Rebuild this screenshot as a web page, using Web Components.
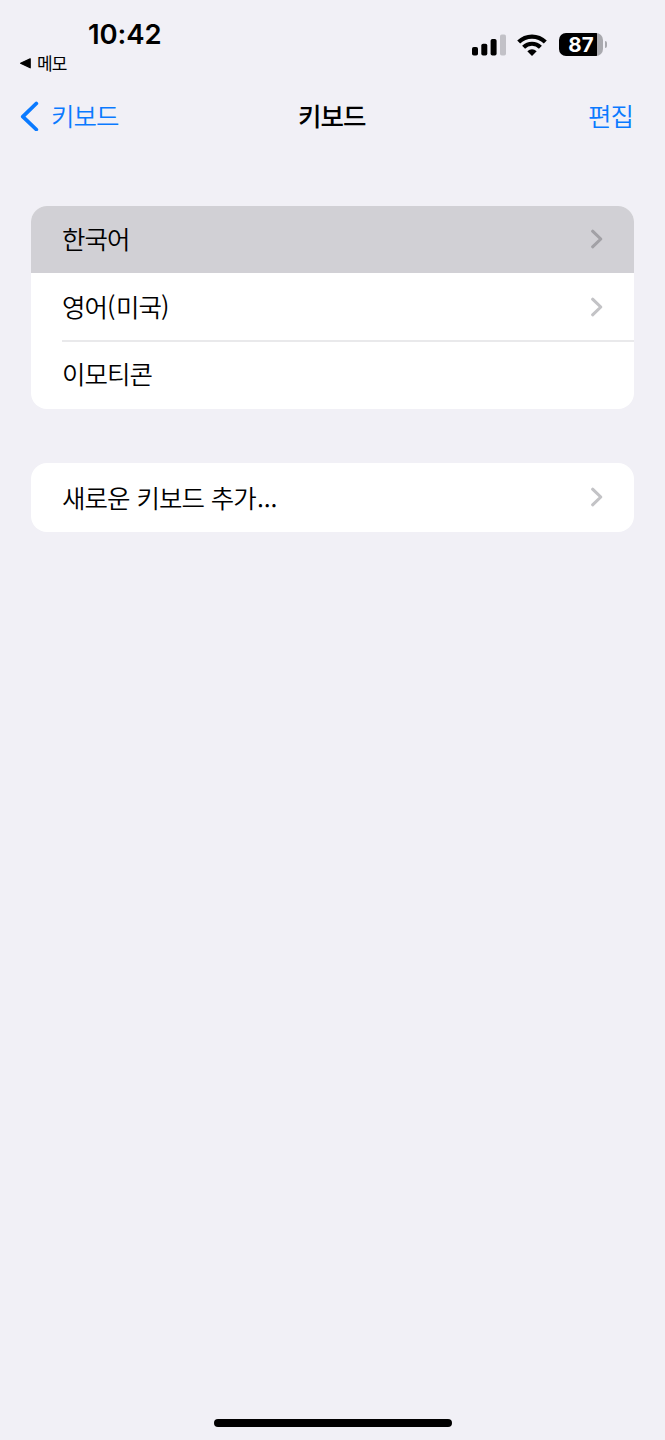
<!DOCTYPE html>
<html lang="ko">
<head>
<meta charset="utf-8">
<meta name="viewport" content="width=device-width, initial-scale=1">
<title>키보드</title>
<style>
    html, body {
        margin: 0;
        height: 100%;
    }

    body {
        --color-tint: #0a7aff;
        --color-label: #000000;
        --color-background: #f1f0f6;
        --color-cell: #ffffff;
        --color-cell-pressed: #d1d0d5;
        --color-separator: #e9e9eb;
        font-family: "Noto Sans CJK KR", sans-serif;
        color: var(--color-label);
        background: var(--color-background);
    }

    /* punctuation is set looser than the Hangul around it */
    .paren {
        letter-spacing: 0.4px;
    }

    .dots {
        letter-spacing: -0.1px;
        margin-left: 1px;
    }
</style>
</head>
<body>
<settings-screen>
    <status-bar slot="status" time="10:42" battery="87">메모</status-bar>
    <nav-bar slot="nav">
        <span slot="back">키보드</span>
        <span slot="title">키보드</span>
        <span slot="action">편집</span>
    </nav-bar>
    <list-group>
        <list-row pressed chevron>한국어</list-row>
        <list-row chevron>영어<span class="paren">(</span>미국<span class="paren">)</span></list-row>
        <list-row separator>이모티콘</list-row>
    </list-group>
    <list-group>
        <list-row chevron tall>새로운 키보드 추가<span class="dots">...</span></list-row>
    </list-group>
</settings-screen>

<script>
(function () {

    class BaseElement extends HTMLElement {
        constructor() {
            super();
            const template = document.createElement('template');
            template.innerHTML = this.constructor.markup;
            this.attachShadow({ mode: 'open' });
            this.shadowRoot.appendChild(template.content.cloneNode(true));
        }
    }

    class SettingsScreen extends BaseElement {
        static markup = `
            <style>
                :host {
                    display: flex;
                    flex-direction: column;
                    height: 100vh;
                    min-height: 700px;
                    box-sizing: border-box;
                    overflow: hidden;
                }

                main {
                    flex: 1;
                    display: flex;
                    flex-direction: column;
                    gap: 54px;
                    padding: 57.5px 31px 0;
                }

                .home {
                    width: 238px;
                    height: 8px;
                    margin: 0 auto 13px;
                    border-radius: 4px;
                    background: #000;
                }
            </style>
            <slot name="status"></slot>
            <slot name="nav"></slot>
            <main><slot></slot></main>
            <div class="home"></div>
        `;
    }

    class StatusBar extends BaseElement {
        static markup = `
            <style>
                :host {
                    display: flex;
                    justify-content: space-between;
                    height: 84px;
                    padding: 0 58px 0 19px;
                    box-sizing: border-box;
                }

                .left {
                    display: flex;
                    flex-direction: column;
                    padding-top: 18px;
                }

                .time {
                    margin-left: 69px;
                    font: 600 27.5px/32px Inter, sans-serif;
                    letter-spacing: -0.1px;
                }

                .return {
                    display: flex;
                    align-items: center;
                    gap: 6px;
                    height: 26px;
                    font-size: 17px;
                    line-height: 26px;
                    letter-spacing: -0.8px;
                }

                .right {
                    display: flex;
                    align-items: center;
                    height: 25px;
                    padding-top: 32px;
                }

                .wifi {
                    margin: 0 12px 0 11px;
                }

                .battery {
                    display: flex;
                    align-items: center;
                    gap: 2px;
                }

                .cell {
                    width: 44px;
                    height: 23px;
                    border-radius: 7px;
                    background: linear-gradient(90deg, #000 38px, #a9a9ae 38px);
                    color: #fff;
                    font: 700 20.5px/24.5px Inter, sans-serif;
                    text-align: center;
                }

                .cap {
                    width: 2px;
                    height: 7px;
                    border-radius: 0 3px 3px 0;
                    background: #a9a9ae;
                }
            </style>
            <div class="left">
                <div class="time"></div>
                <div class="return">
                    <svg width="12" height="12" viewBox="0 0 12 12"><path d="M1.6 6.3 11.2 1.8V10.8Z" stroke="#000" stroke-width="1.2" stroke-linejoin="round"/></svg>
                    <span><slot></slot></span>
                </div>
            </div>
            <div class="right">
                <svg width="34" height="22" viewBox="0 0 34 22">
                    <rect x="0" y="13" width="6" height="8.5" rx="1.8"/>
                    <rect x="9.3" y="9.7" width="6" height="11.8" rx="1.8"/>
                    <rect x="18.6" y="5" width="6" height="16.5" rx="1.8"/>
                    <rect x="28" y="0.5" width="6" height="21" rx="1.8" fill="#c2c1c7"/>
                </svg>
                <svg class="wifi" width="30" height="22" viewBox="0 0 30 22" fill="none" stroke="#000" stroke-width="4.2">
                    <path d="M1.7 8.1A19 19 0 0 1 28.3 8.1"/>
                    <path d="M6.6 13.2A12 12 0 0 1 23.4 13.2"/>
                    <path d="M15 22 10.3 17.3Q15 13.3 19.7 17.3Z" fill="#000" stroke="none"/>
                </svg>
                <div class="battery">
                    <div class="cell"></div>
                    <div class="cap"></div>
                </div>
            </div>
        `;

        connectedCallback() {
            this.shadowRoot.querySelector('.time').textContent = this.getAttribute('time');
            this.shadowRoot.querySelector('.cell').textContent = this.getAttribute('battery');
        }
    }

    class NavBar extends BaseElement {
        static markup = `
            <style>
                :host {
                    display: grid;
                    grid-template-columns: 1fr auto 1fr;
                    align-items: center;
                    height: 64px;
                    padding: 0 32px 0 19.5px;
                    font-size: 25.5px;
                    font-weight: 350;
                    line-height: 34px;
                    letter-spacing: -0.95px;
                }

                .back {
                    display: flex;
                    align-items: center;
                    gap: 12.5px;
                    color: var(--color-tint);
                }

                .title {
                    margin-left: 11px;
                    font-weight: 500;
                }

                .action {
                    justify-self: end;
                    color: var(--color-tint);
                }

                .text {
                    padding-bottom: 2px;
                }
            </style>
            <div class="back">
                <svg width="19" height="30" viewBox="0 0 19 30" fill="none" stroke="currentColor" stroke-width="3.8" stroke-linecap="round" stroke-linejoin="round"><path d="M16.3 2.5 2.8 15.6 16.3 28.5"/></svg>
                <div class="text"><slot name="back"></slot></div>
            </div>
            <div class="title text"><slot name="title"></slot></div>
            <div class="action text"><slot name="action"></slot></div>
        `;
    }

    class ListGroup extends BaseElement {
        static markup = `
            <style>
                :host {
                    display: flex;
                    flex-direction: column;
                    border-radius: 16px;
                    overflow: hidden;
                    background: var(--color-cell);
                }
            </style>
            <slot></slot>
        `;
    }

    class ListRow extends BaseElement {
        static markup = `
            <style>
                :host {
                    display: flex;
                    height: 67.8px;
                    padding-left: 31px;
                    font-size: 25.5px;
                    font-weight: 350;
                    line-height: 34px;
                    letter-spacing: -0.95px;
                    word-spacing: 0.7px;
                }

                :host([tall]) {
                    height: 69px;
                }

                :host([pressed]) {
                    background: var(--color-cell-pressed);
                }

                .content {
                    flex: 1;
                    display: flex;
                    align-items: center;
                    justify-content: space-between;
                    padding-right: 31.5px;
                }

                /* hairline sits on the boundary with the row above */
                :host([separator]) .content {
                    margin-top: -1px;
                    box-shadow: inset 0 2px var(--color-separator);
                }

                .label {
                    padding-bottom: 2px;
                }

                :host([tall]) .label {
                    padding-bottom: 0;
                }

                svg {
                    display: none;
                    color: #c3c3c6;
                }

                :host([chevron]) svg {
                    display: block;
                }

                :host([pressed]) svg {
                    color: #a2a1a6;
                }
            </style>
            <div class="content">
                <div class="label"><slot></slot></div>
                <svg width="13" height="20" viewBox="0 0 13 20" fill="none" stroke="currentColor" stroke-width="3.1" stroke-linecap="round" stroke-linejoin="round"><path d="M2.6 2.2 10.8 10 2.6 17.8"/></svg>
            </div>
        `;
    }

    customElements.define('settings-screen', SettingsScreen);
    customElements.define('status-bar', StatusBar);
    customElements.define('nav-bar', NavBar);
    customElements.define('list-group', ListGroup);
    customElements.define('list-row', ListRow);

})();
</script>
</body>
</html>
